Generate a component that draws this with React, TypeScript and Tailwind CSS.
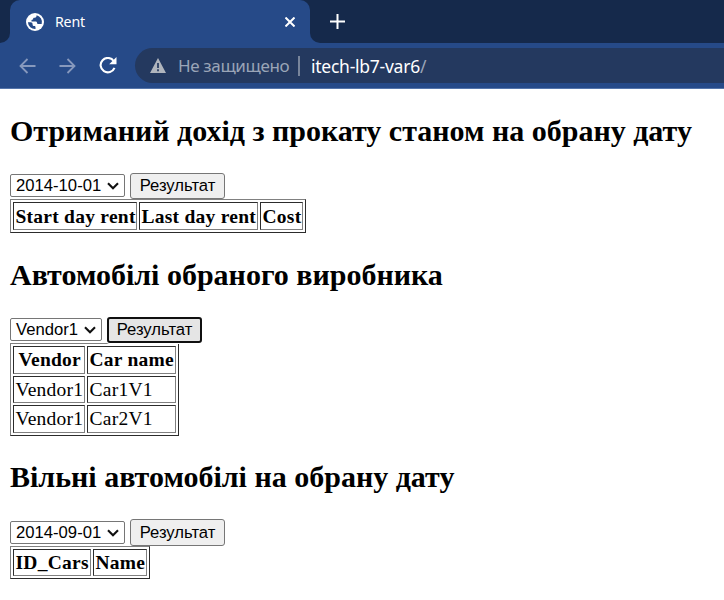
import React from 'react';

const Chevron = () => (
  <svg width="12" height="8" viewBox="0 0 12 8" fill="none" stroke="#101010" strokeWidth="2.1">
    <path d="M1 1.2 6 6.2 11 1.2" />
  </svg>
);

function Select({ value, className }: { value: string; className: string }) {
  return (
    <button className={`flex h-[23px] items-center justify-between rounded-[2px] border border-[#767676] bg-white pr-[5px] pl-[5px] ${className}`}>
      <span className="whitespace-nowrap">{value}</span>
      <Chevron />
    </button>
  );
}

function Result({ className }: { className: string }) {
  return (
    <button className={`flex w-[95px] items-center justify-center rounded-[3px] whitespace-nowrap ${className}`}>
      Результат
    </button>
  );
}

const frame = 'grid gap-[2px] border border-t-[#808080] border-l-[#808080] border-r-[#2c2c2c] border-b-[#2c2c2c] p-[2px] text-[19.5px] tracking-[0.25px]';
const cell = 'border border-t-[#2c2c2c] border-l-[#2c2c2c] border-r-[#808080] border-b-[#808080] pl-[1.5px] whitespace-nowrap';
const controls = "flex font-['Liberation_Sans',sans-serif] text-[16.67px] leading-[20px]";
const heading = 'text-[30px] leading-[34px] font-bold whitespace-nowrap';

export default function App() {
  return (
    <div className="h-[600px] w-[724px] overflow-hidden bg-white font-['Liberation_Serif',serif] text-black">
      <header className="h-[89px] border-b border-[#5575aa] bg-[#264a88] font-['Noto_Sans',sans-serif]">
        <div className="flex h-[43px]">
          <div className="w-[10px] rounded-br-[10px] bg-[#15294b]" />
          <div className="w-[300px] bg-[#15294b]">
            <div className="flex h-[43px] items-center rounded-t-[10px] bg-[#264a88] pl-[16px] text-white">
              <svg width="18" height="18" viewBox="0 0 18 18">
                <circle cx="9" cy="9" r="9" fill="#fff" />
                <path d="M10.6 2.2C10.6 4.1 9.6 4.7 7.9 4.7c-.5 0-.7.3-.7.9 0 1-.6 1.3-1.7 1.3v1.5h3.9c1.2 0 1.7.6 1.7 1.5 0 .8.4 1.1 1.3 1.1h3.3A7.1 7.1 0 0 0 10.6 2.2ZM1.9 9.3a7.1 7.1 0 0 0 7.6 6.7v-1.7c0-.8-.4-1.2-1.2-1.2-1.1 0-1.7-.6-1.7-1.7 0-1.3-.7-2.1-2-2.1Z" fill="#264a88" />
              </svg>
              <span className="ml-[11px] text-[14.2px] leading-[20px] tracking-[-0.2px]">Rent</span>
              <svg className="mr-[15px] ml-auto" width="10" height="10" viewBox="0 0 10 10" stroke="#fff" strokeWidth="2">
                <path d="m.5.5 9 9m0-9-9 9" />
              </svg>
            </div>
          </div>
          <div className="flex flex-1 items-center rounded-bl-[10px] bg-[#15294b] pl-[20px]">
            <svg width="15" height="15" viewBox="0 0 15 15" stroke="#fff" strokeWidth="2">
              <path d="M7.5 0v15M0 7.5h15" />
            </svg>
          </div>
        </div>
        <div className="flex h-[45px] items-start pt-[5px]">
          <div className="flex h-[35px] w-[135px] items-center pl-[19px]">
            <svg width="17" height="16" viewBox="0 0 17 16" fill="none" stroke="#8799bd" strokeWidth="1.8">
              <path d="M16.5 8H2M8.5 1 1.5 8l7 7" />
            </svg>
            <svg className="ml-[23px]" width="17" height="16" viewBox="0 0 17 16" fill="none" stroke="#8799bd" strokeWidth="1.8">
              <path d="M.5 8H15M8.5 1l7 7-7 7" />
            </svg>
            <svg className="ml-[23px]" width="18" height="17" viewBox="0 0 18 17" fill="none">
              <path d="M14.7 4A7.2 7.2 0 1 0 15.5 10.8" stroke="#fff" strokeWidth="2.1" />
              <path d="M17.5 0v7.3h-7.3Z" fill="#fff" />
            </svg>
          </div>
          <div className="flex h-[35px] flex-1 items-center rounded-l-full bg-[#24395f] pl-[15px] text-[17.5px] leading-[24px] text-[#9aa5b7]">
            <svg width="16" height="15" viewBox="0 0 16 15">
              <path d="M8 0 16 15H0Z" fill="#b0b5bd" />
              <path d="M8 5v5M8 11.2v2" stroke="#24395f" strokeWidth="1.7" />
            </svg>
            <span className="ml-[12px] w-[112px] text-[17px] tracking-[-0.35px] whitespace-nowrap">Не защищено</span>
            <span className="ml-[8px] h-[20px] w-[2px] bg-[#78859b]" />
            <span className="ml-[11px] tracking-[-0.25px] whitespace-nowrap"><span className="text-white">itech-lb7-var6</span>/</span>
          </div>
        </div>
      </header>
      <main className="pl-[10px]">
        <section className="h-[144px] pt-[25px]">
          <h2 className={heading}>Отриманий дохід з прокату станом на обрану дату</h2>
          <div className={`${controls} mt-[25px] h-[26px] gap-[5px]`}>
            <Select value="2014-10-01" className="mt-[1px] w-[115px]" />
            <Result className="h-[26px] border border-[#767676] bg-[#efefef]" />
          </div>
          <div className={`${frame} h-[34px] w-[296px] grid-cols-[124px_119px_43px] grid-rows-[28px] leading-[28px] font-bold`}>
            <div className={cell}>Start day rent</div><div className={cell}>Last day rent</div><div className={cell}>Cost</div>
          </div>
        </section>
        <section className="h-[203px] pt-[25px]">
          <h2 className={heading}>Автомобілі обраного виробника</h2>
          <div className={`${controls} mt-[25px] h-[26px] gap-[5px]`}>
            <Select value="Vendor1" className="mt-[1px] w-[92px]" />
            <Result className="relative h-[26px] border-2 border-[#101010] bg-[#e5e5e5] shadow-[0_0_0_1px_white]" />
          </div>
          <div className={`${frame} h-[93px] w-[169px] grid-cols-[72px_89px] grid-rows-[28px_27px_28px] leading-[26px]`}>
            <div className={`${cell} text-center font-bold`}>Vendor</div><div className={`${cell} font-bold`}>Car name</div>
            <div className={cell}>Vendor1</div><div className={cell}>Car1V1</div>
            <div className={cell}>Vendor1</div><div className={cell}>Car2V1</div>
          </div>
        </section>
        <section className="pt-[24px]">
          <h2 className={heading}>Вільні автомобілі на обрану дату</h2>
          <div className={`${controls} mt-[25px] h-[27px] gap-[5px]`}>
            <Select value="2014-09-01" className="mt-[2px] w-[115px]" />
            <Result className="h-[27px] border border-[#767676] bg-[#efefef]" />
          </div>
          <div className={`${frame} h-[33px] w-[140px] grid-cols-[78px_54px] grid-rows-[27px] leading-[26px] font-bold`}>
            <div className={cell}>ID_Cars</div><div className={cell}>Name</div>
          </div>
        </section>
      </main>
    </div>
  );
}
